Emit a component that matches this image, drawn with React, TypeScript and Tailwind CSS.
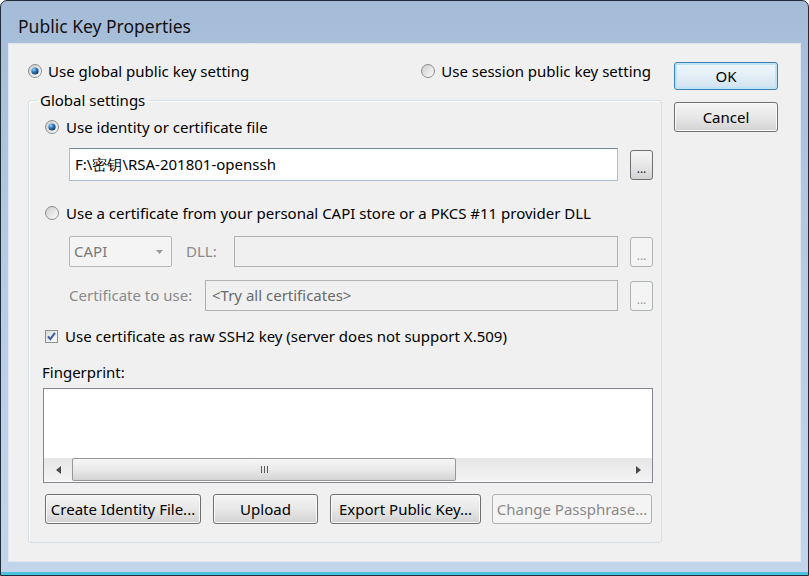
function Radio({ id, checked }: { id: string; checked?: boolean }) {
  return (
    <svg width="14" height="14" viewBox="0 0 14 14" className="shrink-0">
      <defs>
        <linearGradient id={`${id}-o`} x1="0" y1="0" x2="1" y2="1">
          <stop offset="0" stopColor="#c9cacb" />
          <stop offset="1" stopColor="#ffffff" />
        </linearGradient>
        <radialGradient id={`${id}-d`} cx="0.35" cy="0.3" r="0.8">
          <stop offset="0" stopColor="#9ad6fa" />
          <stop offset="0.45" stopColor="#2b74ba" />
          <stop offset="1" stopColor="#0d2c58" />
        </radialGradient>
      </defs>
      <circle cx="7" cy="7" r="6.5" fill={`url(#${id}-o)`} stroke="#8a8c8f" />
      {checked && <circle cx="7" cy="7" r="3.6" fill={`url(#${id}-d)`} />}
    </svg>
  );
}

function Checkbox() {
  return (
    <svg width="13" height="13" viewBox="0 0 13 13" className="shrink-0">
      <defs>
        <linearGradient id="cb-fill" x1="0" y1="0" x2="1" y2="1">
          <stop offset="0" stopColor="#d8d9da" />
          <stop offset="1" stopColor="#ffffff" />
        </linearGradient>
      </defs>
      <rect x="0.5" y="0.5" width="12" height="12" fill="url(#cb-fill)" stroke="#8e8f8f" />
      <path d="M3 6.3 L5.3 9.2 L10 2.8" fill="none" stroke="#3e5f9b" strokeWidth="2" />
    </svg>
  );
}

function Btn({
  children,
  w,
  disabled,
  primary,
}: {
  children: React.ReactNode;
  w: string;
  disabled?: boolean;
  primary?: boolean;
}) {
  let cls =
    'flex h-[30px] items-center justify-center rounded-[3px] border border-[#707070] bg-gradient-to-b from-[#f4f4f4] via-[#e8e8e8] to-[#d2d2d2] shadow-[inset_0_0_0_1px_#fbfbfb] text-black';
  if (primary)
    cls =
      'flex h-[28px] items-center justify-center rounded-[3px] border border-[#3c7fb1] bg-gradient-to-b from-[#eef6fb] via-[#e3eef6] to-[#cfe2f0] shadow-[inset_0_0_0_2px_#bfe3f6] text-black';
  if (disabled)
    cls =
      'flex h-[30px] items-center justify-center rounded-[3px] border border-[#adb2b5] bg-[#f4f4f4] text-[#8a8a8a]';
  return <div className={`${cls} ${w} shrink-0`}>{children}</div>;
}

function Dots({ disabled }: { disabled?: boolean }) {
  return (
    <div
      className={
        disabled
          ? 'flex h-[30px] w-[23px] shrink-0 items-end justify-center rounded-[3px] border border-[#adb2b5] bg-[#f4f4f4] pb-[4px] text-[12px] leading-none text-[#9a9a9a]'
          : 'flex h-[30px] w-[23px] shrink-0 items-end justify-center rounded-[3px] border border-[#707070] bg-gradient-to-b from-[#f4f4f4] via-[#e8e8e8] to-[#d2d2d2] pb-[4px] text-[12px] leading-none text-[#222]'
      }
    >
      ...
    </div>
  );
}

export default function App() {
  return (
    <div className="h-[576px] w-[809px] bg-white font-['Noto_Sans',sans-serif] text-[15px] text-black">
      <div className="flex h-full flex-col rounded-t-[7px] border border-[#1f2c3a] bg-gradient-to-b from-[#a5bcd8] via-[#b8cce4] to-[#c2d5eb]">
        <div className="flex h-[42px] shrink-0 items-center pl-[17px] pt-[8px] text-[17.5px] text-[#111]">
          Public Key Properties
        </div>

        <div className="mx-[7px] flex flex-1 border border-[#dfe8f1] bg-[#f0f0f0] pl-[19px]">
          {/* left column */}
          <div className="w-[634px] shrink-0 pt-[17px]">
            <div className="flex h-[20px] items-center justify-between pr-[11px]">
              <div className="flex items-center gap-[6px]">
                <Radio id="r1" checked />
                Use global public key setting
              </div>
              <div className="flex items-center gap-[6px]">
                <Radio id="r2" />
                Use session public key setting
              </div>
            </div>

            <fieldset className="mt-[9px] rounded-[3px] border border-[#d5dfe5] shadow-[inset_1px_1px_0_#ffffff]">
              <legend className="ml-[8px] h-[20px] px-[3px] leading-[20px]">Global settings</legend>
              <div className="pb-[18px] pl-[16px] pr-[8px]">
                <div className="mt-[7px] flex h-[20px] items-center gap-[7px]">
                  <Radio id="r3" checked />
                  Use identity or certificate file
                </div>

                <div className="ml-[24px] mt-[11px] flex h-[33px] items-center gap-[12px]">
                  <div className="flex h-[33px] w-[549px] items-center border border-[#a8bfd3] border-t-[#6f8aa1] bg-white pl-[5px]">
                    F:\密钥\RSA-201801-openssh
                  </div>
                  <Dots />
                </div>

                <div className="mt-[22px] flex h-[20px] items-center gap-[7px]">
                  <Radio id="r4" />
                  Use a certificate from your personal CAPI store or a PKCS #11 provider DLL
                </div>

                <div className="ml-[24px] mt-[13px] flex h-[31px] items-center">
                  <div className="flex h-[31px] w-[103px] items-center justify-between rounded-[2px] border border-[#b4b7ba] bg-[#f4f4f4] pl-[4px] pr-[8px] text-[#7a7a7a]">
                    CAPI
                    <svg width="7" height="4" viewBox="0 0 7 4">
                      <path d="M0 0 H7 L3.5 4 Z" fill="#9a9a9a" />
                    </svg>
                  </div>
                  <div className="ml-[14px] w-[48px] text-[#8a8a8a]">DLL:</div>
                  <div className="h-[31px] w-[384px] border border-[#b2b2b2] bg-[#f0f0f0]" />
                  <div className="ml-[12px]">
                    <Dots disabled />
                  </div>
                </div>

                <div className="ml-[24px] mt-[13px] flex h-[31px] items-center">
                  <div className="w-[136px] text-[#8a8a8a]">Certificate to use:</div>
                  <div className="flex h-[31px] w-[413px] items-center border border-[#b2b2b2] bg-[#f0f0f0] pl-[6px] text-[#6a6a6a]">
                    &lt;Try all certificates&gt;
                  </div>
                  <div className="ml-[12px]">
                    <Dots disabled />
                  </div>
                </div>

                <div className="mt-[15px] flex h-[20px] items-center gap-[7px]">
                  <Checkbox />
                  Use certificate as raw SSH2 key (server does not support X.509)
                </div>

                <div className="-ml-[3px] mt-[16px] flex h-[20px] items-center">Fingerprint:</div>

                <div className="-ml-[2px] mt-[6px] flex h-[95px] w-[610px] flex-col border border-[#828790] bg-white">
                  <div className="flex-1" />
                  <div className="mb-[1px] flex h-[23px] bg-gradient-to-b from-[#e6e6e6] to-[#f3f3f3]">
                    <div className="flex w-[28px] items-center justify-center">
                      <svg width="5" height="8" viewBox="0 0 5 8">
                        <path d="M5 0 V8 L0 4 Z" fill="#4a4a4a" />
                      </svg>
                    </div>
                    <div className="flex w-[384px] items-center justify-center gap-[2px] rounded-[2px] border border-[#979797] bg-gradient-to-b from-[#f6f6f6] via-[#e9e9e9] to-[#d4d4d4]">
                      <span className="h-[7px] w-[1px] bg-[#5a5a5a]" />
                      <span className="h-[7px] w-[1px] bg-[#5a5a5a]" />
                      <span className="h-[7px] w-[1px] bg-[#5a5a5a]" />
                    </div>
                    <div className="flex-1" />
                    <div className="flex w-[28px] items-center justify-center">
                      <svg width="5" height="8" viewBox="0 0 5 8">
                        <path d="M0 0 V8 L5 4 Z" fill="#4a4a4a" />
                      </svg>
                    </div>
                  </div>
                </div>

                <div className="mt-[11px] flex items-center">
                  <Btn w="w-[156px]">Create Identity File...</Btn>
                  <div className="ml-[12px]">
                    <Btn w="w-[105px]">Upload</Btn>
                  </div>
                  <div className="ml-[12px]">
                    <Btn w="w-[151px]">Export Public Key...</Btn>
                  </div>
                  <div className="ml-[11px]">
                    <Btn w="w-[160px]" disabled>
                      Change Passphrase...
                    </Btn>
                  </div>
                </div>
              </div>
            </fieldset>
          </div>

          {/* right column */}
          <div className="ml-[12px] flex w-[104px] shrink-0 flex-col pt-[18px]">
            <Btn w="w-[104px]" primary>
              OK
            </Btn>
            <div className="mt-[12px]">
              <Btn w="w-[104px]">Cancel</Btn>
            </div>
          </div>
        </div>

        <div className="h-[10px] shrink-0" />
        <div className="h-[3px] shrink-0 bg-[#4cc1de]" />
      </div>
    </div>
  );
}
